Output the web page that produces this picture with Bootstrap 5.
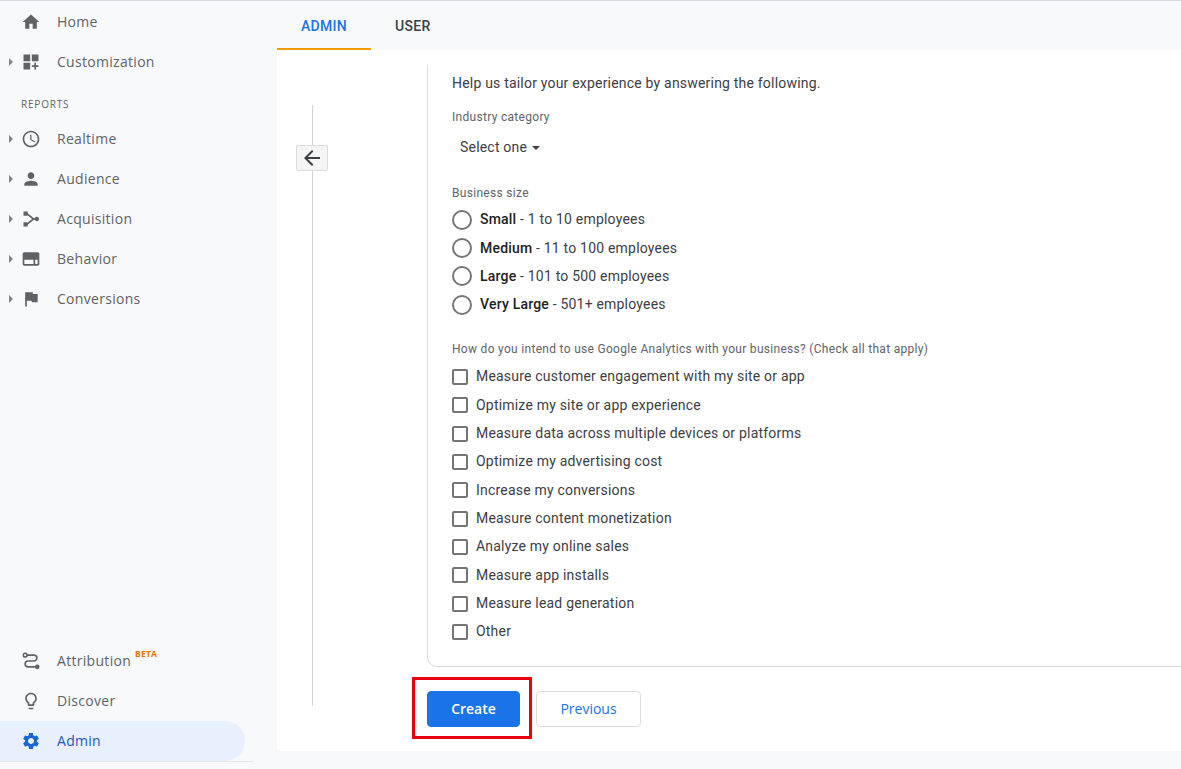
<!DOCTYPE html>
<html lang="en">
<head>
<meta charset="utf-8">
<title>Admin</title>
<link href="https://cdn.jsdelivr.net/npm/bootstrap@5.3.0/dist/css/bootstrap.min.css" rel="stylesheet">
<style>
html,body{height:769px;overflow:hidden}
body{background:#f8f9fa;font-family:Roboto,"Liberation Sans",sans-serif;font-size:14px;color:#3c4043}
.page-top{height:1px;background:#dadce0}
.shell{height:768px}
.side{width:277px;flex:none;font-family:"Open Sans",Roboto,sans-serif}
.side-item{height:40px;width:245px;padding:0 0 2px 21px;color:#5f6368;font-size:14px;letter-spacing:.3px;font-weight:500;position:relative;text-decoration:none}
.side-item svg.ico{width:20px;height:20px;flex:none;fill:#5f6368;margin:2px 16px 0 0}
.side-caret{position:absolute;left:9px;top:16px;width:0;height:0;border-left:4px solid #80868b;border-top:4px solid transparent;border-bottom:4px solid transparent}
.side-head{font-size:10px;font-weight:500;letter-spacing:.8px;color:#5f6368;height:37px;padding:0 0 0 21px;line-height:44px}
.side-item.is-on{background:#e8f0fe;color:#1a56c4;border-radius:0 20px 20px 0}
.side-item.is-on svg.ico{fill:#1a66d6}
.beta{font-size:8.5px;font-weight:700;color:#e37400;margin-left:4px;position:relative;top:-6px;letter-spacing:.2px}
.side-rule{height:1px;width:253px;background:#e3e5e8;margin-bottom:7px}
.main-col{min-width:0}
.tabbar{height:49px}
.tab-lnk{height:49px;padding:3px 24px 0;font-size:14px;letter-spacing:.3px;font-weight:500;color:#3c4043;text-decoration:none;border-bottom:2px solid transparent}
.tab-lnk.is-on{color:#1a73e8;border-bottom-color:#f29900}
.white-panel{background:#fff;height:701px}
.stepper{width:150px;flex:none;position:relative;padding-top:55px}
.step-line{width:1px;height:601px;background:#d0d3d6;margin-left:35px}
.back-btn{position:absolute;left:19px;top:95px;width:32px;height:26px;background:#f5f5f5;border:1px solid #dadce0;border-radius:2px;padding:0}
.back-btn svg{width:24px;height:24px;display:block;margin:0 auto;fill:#3c4043}
.form-col{min-width:0}
.form-box{height:602px;margin-top:15px;border:1px solid #d9dbde;border-width:0 0 1px 1px;border-bottom-left-radius:10px;padding-left:24px;letter-spacing:.2px}
.r-h{height:37px;line-height:37px;font-size:14px;color:#3c4043}
.r-l{font-size:12px;color:#5f6368;letter-spacing:.3px}
.l-a{height:16px;line-height:16px;margin-top:7px}
.sel{height:30px;margin-top:7px;padding-left:8px;line-height:30px;font-size:14px;color:#3c4043}
.sel-c{display:inline-block;margin-left:5px;width:0;height:0;vertical-align:middle;border-left:4px solid transparent;border-right:4px solid transparent;border-top:4px solid #3c4043}
.l-b{margin-top:23px;height:16px;line-height:16px}
.rad-row{height:28.3px;font-size:14px;color:#3c4043}
.rad-row b{font-weight:500;color:#202124}
.rad-dot{width:20px;height:20px;margin:0 8px 0 0!important;border:2px solid #757575;background:#fff;flex:none}
.rads{margin-top:4.6px}
.l-c{margin-top:22px;height:16px;line-height:16px}
.chks{margin-top:6px}
.chk-row{height:28.33px;font-size:14px;color:#3c4043}
.chk-box{width:16px;height:16px;margin:0 8px 0 0!important;border:2px solid #757575;border-radius:2px!important;background:#fff;flex:none}
.act-row{height:85px;padding-top:24px;gap:16px}
.go-wrap{position:relative}
.go-btn{width:93px;height:36px;background:#1a73e8;border-color:#1a73e8;font-size:14px;font-weight:600;padding:0 0 2px;font-family:"Open Sans",Roboto,sans-serif;border-radius:4px}
.prev-btn{width:105px;height:36px;background:#fff;border:1px solid #dadce0;color:#1a73e8;font-size:14px;font-weight:500;padding:0 0 2px;font-family:"Open Sans",Roboto,sans-serif;border-radius:4px}
.red-frame{position:absolute;left:-15px;top:-14px;width:120px;height:62px;border:3px solid #e8000b;pointer-events:none}
</style>
</head>
<body>
<div class="page-top"></div>
<div class="shell d-flex">
  <nav class="side d-flex flex-column">
    <a class="side-item d-flex align-items-center" style="margin-top:1px"><svg class="ico" viewBox="0 0 24 24"><path d="M10 20v-6h4v6h5v-8h3L12 3 2 12h3v8z"/></svg>Home</a>
    <a class="side-item d-flex align-items-center"><span class="side-caret"></span><svg class="ico" viewBox="0 0 24 24"><path d="M3 3h8v8H3zm10 0h8v8h-8zM3 13h8v8H3zm15 0h-2v3h-3v2h3v3h2v-3h3v-2h-3z"/></svg>Customization</a>
    <div class="side-head">REPORTS</div>
    <a class="side-item d-flex align-items-center"><span class="side-caret"></span><svg class="ico" viewBox="0 0 24 24"><path d="M11.99 2C6.47 2 2 6.48 2 12s4.47 10 9.99 10C17.52 22 22 17.52 22 12S17.52 2 11.99 2zM12 20c-4.42 0-8-3.58-8-8s3.58-8 8-8 8 3.58 8 8-3.58 8-8 8z"/><path d="M12.5 7H11v6l5.25 3.15.75-1.23-4.5-2.67z"/></svg>Realtime</a>
    <a class="side-item d-flex align-items-center"><span class="side-caret"></span><svg class="ico" viewBox="0 0 24 24"><path d="M12 12c2.21 0 4-1.79 4-4s-1.79-4-4-4-4 1.79-4 4 1.79 4 4 4zm0 2c-2.67 0-8 1.34-8 4v2h16v-2c0-2.66-5.33-4-8-4z"/></svg>Audience</a>
    <a class="side-item d-flex align-items-center"><span class="side-caret"></span><svg class="ico" viewBox="0 0 24 24"><path d="M3 3h5v5H3zM3 16h5v5H3z"/><path d="M7 5.5l8 6.5-8 6.5" fill="none" stroke="#5f6368" stroke-width="2"/><path d="M14 11h3v2h-3z"/><circle cx="19" cy="12" r="2.6"/></svg>Acquisition</a>
    <a class="side-item d-flex align-items-center"><span class="side-caret"></span><svg class="ico" viewBox="0 0 24 24"><path d="M20 4H4c-1.1 0-2 .9-2 2v12c0 1.1.9 2 2 2h16c1.1 0 2-.9 2-2V6c0-1.1-.9-2-2-2zM4 18v-5h11v5H4zm16 0h-3v-5h3v5z"/></svg>Behavior</a>
    <a class="side-item d-flex align-items-center"><span class="side-caret"></span><svg class="ico" viewBox="0 0 24 24"><path d="M14.4 6L14 4H5v17h2v-7h5.6l.4 2h7V6z"/></svg>Conversions</a>
    <div class="flex-grow-1"></div>
    <a class="side-item d-flex align-items-center"><svg class="ico" viewBox="0 0 24 24"><circle cx="5" cy="5" r="2.2" fill="none" stroke="#5f6368" stroke-width="1.8"/><path d="M7 5h8.5a3.5 3.5 0 0 1 0 7h-7a3.5 3.5 0 0 0 0 7H17" fill="none" stroke="#5f6368" stroke-width="2"/><circle cx="19.5" cy="19" r="2.8"/></svg>Attribution<span class="beta">BETA</span></a>
    <a class="side-item d-flex align-items-center"><svg class="ico" viewBox="0 0 24 24"><path d="M9 21c0 .55.45 1 1 1h4c.55 0 1-.45 1-1v-1H9v1zm3-19C8.14 2 5 5.14 5 9c0 2.38 1.19 4.47 3 5.74V17c0 .55.45 1 1 1h6c.55 0 1-.45 1-1v-2.26c1.81-1.27 3-3.36 3-5.74 0-3.86-3.14-7-7-7zm2 11.7V16h-4v-2.3C8.48 12.63 7 11.53 7 9c0-2.76 2.24-5 5-5s5 2.24 5 5c0 2.49-1.51 3.65-3 4.7z"/></svg>Discover</a>
    <a class="side-item is-on d-flex align-items-center"><svg class="ico" viewBox="0 0 24 24"><path d="M19.14,12.94c0.04-0.3,0.06-0.61,0.06-0.94c0-0.32-0.02-0.64-0.07-0.94l2.03-1.58c0.18-0.14,0.23-0.41,0.12-0.61 l-1.92-3.32c-0.12-0.22-0.37-0.29-0.59-0.22l-2.39,0.96c-0.5-0.38-1.03-0.7-1.62-0.94L14.4,2.81c-0.04-0.24-0.24-0.41-0.48-0.41 h-3.84c-0.24,0-0.43,0.17-0.47,0.41L9.25,5.35C8.66,5.59,8.12,5.92,7.63,6.29L5.24,5.33c-0.22-0.08-0.47,0-0.59,0.22L2.74,8.87 C2.62,9.08,2.66,9.34,2.86,9.48l2.03,1.58C4.84,11.36,4.8,11.69,4.8,12s0.02,0.64,0.07,0.94l-2.03,1.58 c-0.18,0.14-0.23,0.41-0.12,0.61l1.92,3.32c0.12,0.22,0.37,0.29,0.59,0.22l2.39-0.96c0.5,0.38,1.03,0.7,1.62,0.94l0.36,2.54 c0.05,0.24,0.24,0.41,0.48,0.41h3.84c0.24,0,0.44-0.17,0.47-0.41l0.36-2.54c0.59-0.24,1.13-0.56,1.62-0.94l2.39,0.96 c0.22,0.08,0.47,0,0.59-0.22l1.92-3.32c0.12-0.22,0.07-0.47-0.12-0.61L19.14,12.94z M12,15.6c-1.98,0-3.6-1.62-3.6-3.6 s1.62-3.6,3.6-3.6s3.6,1.62,3.6,3.6S13.98,15.6,12,15.6z"/></svg>Admin</a>
    <div class="side-rule"></div>
  </nav>
  <main class="main-col flex-grow-1">
    <div class="tabbar nav">
      <a class="tab-lnk is-on d-flex align-items-center">ADMIN</a>
      <a class="tab-lnk d-flex align-items-center">USER</a>
    </div>
    <div class="white-panel d-flex">
      <div class="stepper">
        <div class="step-line"></div>
        <button class="back-btn" type="button" aria-label="Back"><svg viewBox="0 0 24 24"><path d="M20 11H7.83l5.59-5.59L12 4l-8 8 8 8 1.41-1.41L7.83 13H20v-2z"/></svg></button>
      </div>
      <div class="form-col flex-grow-1">
        <div class="form-box">
          <div class="r-h">Help us tailor your experience by answering the following.</div>
          <div class="r-l l-a">Industry category</div>
          <div class="sel">Select one<span class="sel-c"></span></div>
          <div class="r-l l-b">Business size</div>
          <div class="rads">
            <label class="rad-row d-flex align-items-center"><input class="form-check-input rad-dot" type="radio" name="sz"><span><b>Small</b> - 1 to 10 employees</span></label>
            <label class="rad-row d-flex align-items-center"><input class="form-check-input rad-dot" type="radio" name="sz"><span><b>Medium</b> - 11 to 100 employees</span></label>
            <label class="rad-row d-flex align-items-center"><input class="form-check-input rad-dot" type="radio" name="sz"><span><b>Large</b> - 101 to 500 employees</span></label>
            <label class="rad-row d-flex align-items-center"><input class="form-check-input rad-dot" type="radio" name="sz"><span><b>Very Large</b> - 501+ employees</span></label>
          </div>
          <div class="r-l l-c">How do you intend to use Google Analytics with your business? (Check all that apply)</div>
          <div class="chks">
            <label class="chk-row d-flex align-items-center"><input class="form-check-input chk-box" type="checkbox">Measure customer engagement with my site or app</label>
            <label class="chk-row d-flex align-items-center"><input class="form-check-input chk-box" type="checkbox">Optimize my site or app experience</label>
            <label class="chk-row d-flex align-items-center"><input class="form-check-input chk-box" type="checkbox">Measure data across multiple devices or platforms</label>
            <label class="chk-row d-flex align-items-center"><input class="form-check-input chk-box" type="checkbox">Optimize my advertising cost</label>
            <label class="chk-row d-flex align-items-center"><input class="form-check-input chk-box" type="checkbox">Increase my conversions</label>
            <label class="chk-row d-flex align-items-center"><input class="form-check-input chk-box" type="checkbox">Measure content monetization</label>
            <label class="chk-row d-flex align-items-center"><input class="form-check-input chk-box" type="checkbox">Analyze my online sales</label>
            <label class="chk-row d-flex align-items-center"><input class="form-check-input chk-box" type="checkbox">Measure app installs</label>
            <label class="chk-row d-flex align-items-center"><input class="form-check-input chk-box" type="checkbox">Measure lead generation</label>
            <label class="chk-row d-flex align-items-center"><input class="form-check-input chk-box" type="checkbox">Other</label>
          </div>
        </div>
        <div class="act-row d-flex align-items-start">
          <div class="go-wrap"><button class="btn btn-primary go-btn" type="button">Create</button><span class="red-frame"></span></div>
          <button class="btn prev-btn" type="button">Previous</button>
        </div>
      </div>
    </div>
  </main>
</div>
<script src="https://cdn.jsdelivr.net/npm/bootstrap@5.3.0/dist/js/bootstrap.bundle.min.js"></script>
</body>
</html>
